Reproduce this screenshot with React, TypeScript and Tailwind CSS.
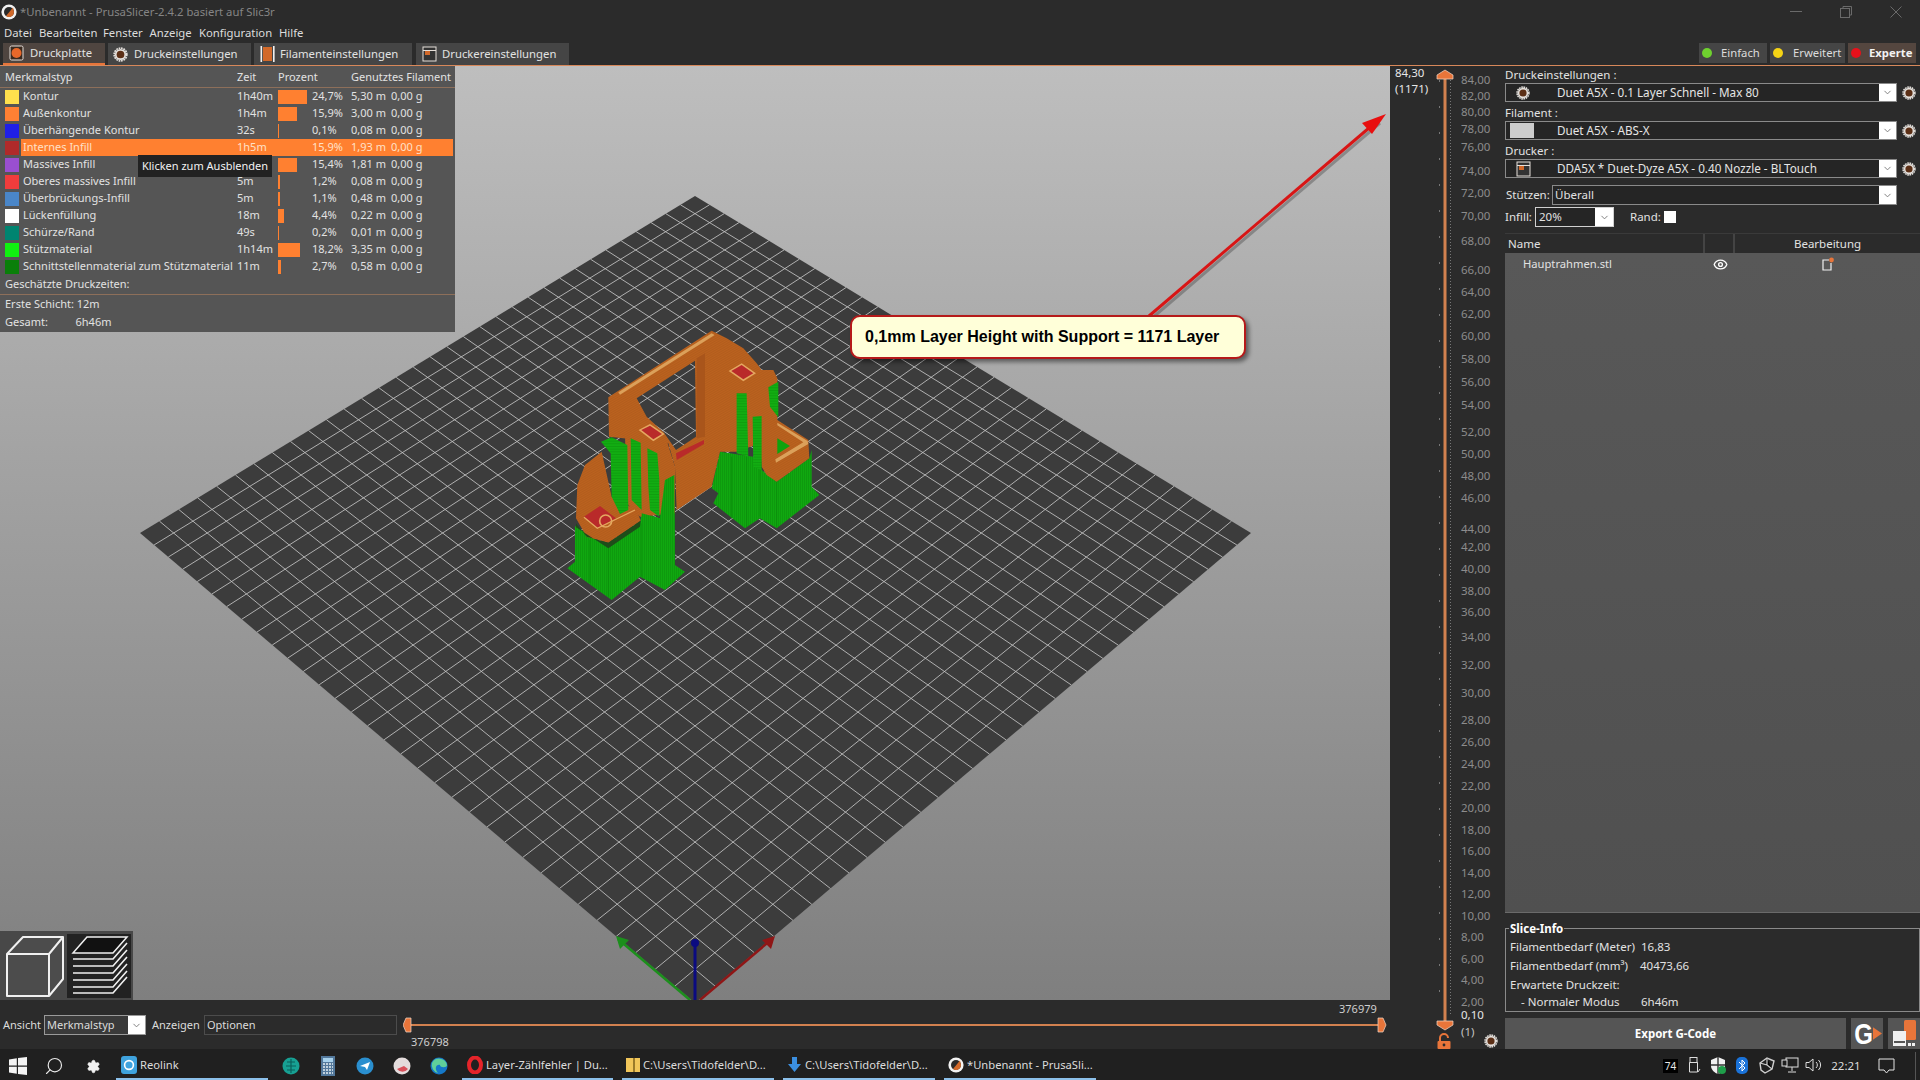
import { ChevronDown, Eye, Search, Settings } from 'lucide-react';

const rows = [
  { name: 'Kontur', color: '#ffe14d', time: '1h40m', bar: 29, pct: '24,7%', m: '5,30 m' },
  { name: 'Außenkontur', color: '#ff8033', time: '1h4m', bar: 19, pct: '15,9%', m: '3,00 m' },
  { name: 'Überhängende Kontur', color: '#1f1fe6', time: '32s', bar: 1, pct: '0,1%', m: '0,08 m' },
  { name: 'Internes Infill', color: '#b02a2a', time: '1h5m', bar: 0, pct: '15,9%', m: '1,93 m', active: true },
  { name: 'Massives Infill', color: '#9a4fd0', time: '', bar: 19, pct: '15,4%', m: '1,81 m' },
  { name: 'Oberes massives Infill', color: '#f03c3c', time: '5m', bar: 1.5, pct: '1,2%', m: '0,08 m' },
  { name: 'Überbrückungs-Infill', color: '#4a86c8', time: '5m', bar: 1.5, pct: '1,1%', m: '0,48 m' },
  { name: 'Lückenfüllung', color: '#ffffff', time: '18m', bar: 5.5, pct: '4,4%', m: '0,22 m' },
  { name: 'Schürze/Rand', color: '#008470', time: '49s', bar: 1, pct: '0,2%', m: '0,01 m' },
  { name: 'Stützmaterial', color: '#10f010', time: '1h14m', bar: 22, pct: '18,2%', m: '3,35 m' },
  { name: 'Schnittstellenmaterial zum Stützmaterial', color: '#0a7f0a', time: '11m', bar: 3, pct: '2,7%', m: '0,58 m' },
];

// top position of each height label on the layer slider
const layerLabels: [string, number][] = [
  ['84,00', 80], ['82,00', 96], ['80,00', 112], ['78,00', 129], ['76,00', 147], ['74,00', 171], ['72,00', 193],
  ['70,00', 216], ['68,00', 241], ['66,00', 270], ['64,00', 292], ['62,00', 314], ['60,00', 336], ['58,00', 359],
  ['56,00', 382], ['54,00', 405], ['52,00', 432], ['50,00', 454], ['48,00', 476], ['46,00', 498], ['44,00', 529],
  ['42,00', 547], ['40,00', 569], ['38,00', 591], ['36,00', 612], ['34,00', 637], ['32,00', 665], ['30,00', 693],
  ['28,00', 720], ['26,00', 742], ['24,00', 764], ['22,00', 786], ['20,00', 808], ['18,00', 830], ['16,00', 851],
  ['14,00', 873], ['12,00', 894], ['10,00', 916], ['8,00', 937], ['6,00', 959], ['4,00', 980], ['2,00', 1002],
];

function plateLines(n: number) {
  const [x0, y0, x1, y1, x2, y2, x3, y3] = [140, 533, 695, 196, 1251, 533, 695, 1003];
  const dx1 = x1 - x2, dx2 = x3 - x2, sx = x0 - x1 + x2 - x3;
  const dy1 = y1 - y2, dy2 = y3 - y2, sy = y0 - y1 + y2 - y3;
  const den = dx1 * dy2 - dx2 * dy1;
  const g = (sx * dy2 - dx2 * sy) / den;
  const h = (dx1 * sy - sx * dy1) / den;
  const a = x1 - x0 + g * x1, b = x3 - x0 + h * x3;
  const d = y1 - y0 + g * y1, e = y3 - y0 + h * y3;
  const pt = (u: number, v: number) => {
    const w = g * u + h * v + 1;
    return [(a * u + b * v + x0) / w, (d * u + e * v + y0) / w];
  };
  const out: number[][] = [];
  for (let i = 1; i < n; i++) {
    out.push([...pt(i / n, 0), ...pt(i / n, 1)]);
    out.push([...pt(0, i / n), ...pt(1, i / n)]);
  }
  return out;
}

function Gear({ size = 14 }: { size?: number }) {
  return (
    <svg width={size} height={size} viewBox="0 0 14 14" className="shrink-0">
      <circle cx="7" cy="7" r="5.9" fill="none" stroke="#e4e0dc" strokeWidth="1.6" strokeDasharray="1.6 0.7" />
      <circle cx="7" cy="7" r="5.2" fill="#e4e0dc" />
      <circle cx="7" cy="7" r="3.6" fill="#5c2f16" />
    </svg>
  );
}

function Combo({ icon, text }: { icon: React.ReactNode; text: string }) {
  return (
    <div className="flex items-center">
      <div className="flex h-[19px] w-[392px] items-center border border-[#8a8a8a] bg-[#252525]">
        <div className="flex w-[51px] shrink-0 items-center justify-start pl-[4px]">{icon}</div>
        <span className="flex-1 truncate text-[11.7px] text-[#e6e6e6]">{text}</span>
        <div className="flex h-full w-[17px] items-center justify-center bg-white">
          <ChevronDown size={11} color="#777" />
        </div>
      </div>
      <div className="flex flex-1 justify-center pl-[1px]">
        <Gear />
      </div>
    </div>
  );
}

function Tile({ w, icon, label }: { w: string; icon: React.ReactNode; label: string }) {
  return (
    <div className={`flex h-full items-center gap-[3px] border-b-[2px] border-[#8cc0ea] pl-[4px] text-[#dcdcdc] ${w}`}>
      {icon}
      <span className="whitespace-nowrap text-[11.2px]">{label}</span>
    </div>
  );
}

function PrusaIcon({ size = 16 }: { size?: number }) {
  return (
    <svg width={size} height={size} viewBox="0 0 16 16" className="shrink-0">
      <circle cx="8" cy="8" r="7.6" fill="#f2f2f2" />
      <circle cx="8" cy="8" r="5" fill="#2a2a2a" />
      <path d="M12 3.5 L13 8 A5 5 0 0 1 5 12 Z" fill="#d2692a" />
    </svg>
  );
}

function TabIcon({ kind }: { kind: string }) {
  if (kind === 'plate')
    return (
      <svg width="15" height="16" viewBox="0 0 15 16">
        <rect x="1" y="1" width="13" height="14" rx="1.5" fill="#3a2a20" stroke="#e6e0da" />
        <circle cx="7.5" cy="8" r="5" fill="#e8682a" />
      </svg>
    );
  if (kind === 'gear') return <Gear size={15} />;
  if (kind === 'filament')
    return (
      <svg width="15" height="16" viewBox="0 0 15 16">
        <rect x="0.5" y="0" width="1.6" height="16" fill="#f0f0f0" />
        <rect x="3" y="1" width="9" height="14" fill="#d2692a" />
        <rect x="13" y="0" width="1.6" height="16" fill="#f0f0f0" />
      </svg>
    );
  return (
    <svg width="15" height="16" viewBox="0 0 15 16">
      <rect x="1" y="1" width="13" height="14" fill="#333" stroke="#e6e0da" />
      <rect x="1" y="4" width="13" height="1" fill="#e6e0da" />
      <rect x="3" y="5" width="5" height="4" fill="#d2692a" />
    </svg>
  );
}

function Model() {
  return (
    <g transform="translate(540 310) scale(0.3333)">
      <defs>
        <pattern id="greenLines" width="6" height="6" patternUnits="userSpaceOnUse">
          <rect width="6" height="6" fill="#10a810" />
          <rect width="2" height="6" fill="#0c930c" />
        </pattern>
        <pattern id="strutLines" width="8" height="8" patternUnits="userSpaceOnUse">
          <rect width="8" height="8" fill="#12ad12" />
          <rect width="8" height="2" fill="#0d980d" />
        </pattern>
        <pattern id="orangeLines" width="8" height="6" patternUnits="userSpaceOnUse" patternTransform="rotate(-30)">
          <rect width="8" height="6" fill="#bb621f" />
          <rect width="8" height="1.5" fill="#a9571b" />
        </pattern>
      </defs>
      {/* support bases */}
      <polygon points="82,775 105,755 105,648 205,712 300,640 305,610 360,625 375,510 403,495 405,765 435,785 375,840 300,800 215,870" fill="url(#greenLines)" />
      <polygon points="515,535 540,425 640,440 665,480 710,515 808,445 815,420 815,530 838,555 710,655 660,625 615,655 520,580 535,550" fill="url(#greenLines)" />
      <g stroke="#0a8a0a" strokeWidth="2">
        <line x1="150" y1="690" x2="150" y2="820" /><line x1="205" y1="715" x2="205" y2="860" /><line x1="305" y1="640" x2="305" y2="800" />
        <line x1="575" y1="440" x2="575" y2="625" />
        <line x1="620" y1="440" x2="620" y2="650" /><line x1="660" y1="470" x2="660" y2="620" /><line x1="710" y1="515" x2="710" y2="650" />
      </g>
      {/* printed frame with window */}
      <path
        d="M205 262 L515 62 L560 85 L610 115 L650 160 L665 180 L700 180 L712 205 L712 330 L805 390 L808 445 L710 515 L680 495 L665 470 L660 400 L590 425 L540 425 L515 530 L410 600 L405 470 L385 400 L300 390 L207 380 Z M290 265 L465 152 L468 380 L408 420 L372 368 L320 320 Z"
        fill="url(#orangeLines)"
        fillRule="evenodd"
      />
      <polygon points="470,145 495,130 495,380 470,385" fill="#a9551b" />
      <polygon points="255,370 300,360 380,390 405,470 405,610 300,620 260,580" fill="url(#orangeLines)" />
      <polygon points="108,625 112,525 135,465 185,425 215,560 290,600 302,632 205,698 140,680" fill="url(#orangeLines)" />
      <polygon points="108,640 140,680 205,698 302,632 300,650 205,715 108,652" fill="#1f4d1a" />
      <polygon points="235,247 515,70 524,75 240,254" fill="#dba05a" />
      <polygon points="712,338 803,393 805,402 708,458 706,448 790,397 712,346" fill="#dba05a" />
      <polygon points="712,385 750,408 712,432" fill="#0ea30e" />
      {/* top infill patches */}
      <polygon points="566,183 605,160 648,190 610,214" fill="#e4a860" />
      <polygon points="574,183 605,165 640,190 610,208" fill="#b92a2a" />
      <polygon points="296,360 330,342 374,372 340,394" fill="#e4a860" />
      <polygon points="304,360 330,347 366,372 340,388" fill="#b92a2a" />
      <polygon points="408,430 492,390 492,402 410,450" fill="#b92a2a" />
      <polygon points="132,620 180,588 228,625 172,655" fill="#b92a2a" />
      <circle cx="197" cy="633" r="18" fill="none" stroke="#e4a860" strokeWidth="5" />
      <path d="M132 622 L172 655 L285 600" fill="none" stroke="#e4a860" strokeWidth="4" />
      {/* support struts in front of the frame */}
      <polygon points="305,610 360,625 375,510 403,495 405,770 305,780" fill="url(#greenLines)" />
      <polygon points="183,395 215,382 262,405 265,600 240,612 215,560 212,430" fill="url(#strutLines)" />
      <polygon points="272,385 302,398 305,600 275,570" fill="url(#strutLines)" />
      <polygon points="322,415 352,430 358,510 358,620 330,600 325,530" fill="url(#strutLines)" />
      <polygon points="590,250 620,250 625,440 590,430" fill="url(#strutLines)" />
      <polygon points="638,320 665,318 665,480 640,470" fill="url(#strutLines)" />
      <polygon points="685,232 715,215 715,322 690,290" fill="url(#strutLines)" />
    </g>
  );
}

function Viewport() {
  const lines = plateLines(33);
  return (
    <div className="relative h-[934px] bg-linear-to-b from-[#bebebe] to-[#7f7f7f]">
      <svg viewBox="0 66 1390 934" width="1390" height="934" className="absolute inset-0">
        <polygon points="140,533 695,196 1251,533 695,1003" fill="#3c3c3c" />
        <g stroke="#c4c4c4" strokeWidth="1" strokeOpacity="0.85">
          {lines.map((l, i) => (
            <line key={i} x1={l[0]} y1={l[1]} x2={l[2]} y2={l[3]} />
          ))}
        </g>
        <Model />
        {/* axes */}
        <line x1="690" y1="1000" x2="618" y2="939" stroke="#1c8f1c" strokeWidth="2.5" />
        <polygon points="616,936 629,940 620,949" fill="#1c8f1c" />
        <line x1="700" y1="1000" x2="772" y2="939" stroke="#8f1616" strokeWidth="2.5" />
        <polygon points="775,936 762,940 771,949" fill="#8f1616" />
        <line x1="695" y1="1000" x2="695" y2="945" stroke="#0b0b80" strokeWidth="3" />
        <circle cx="695" cy="943" r="4" fill="#0b0b80" />
        {/* annotation arrow */}
        <g transform="translate(2 3)" opacity="0.3">
          <line x1="1149" y1="316" x2="1378" y2="120" stroke="#222" strokeWidth="3" />
        </g>
        <line x1="1149" y1="316" x2="1376" y2="122" stroke="#d81616" strokeWidth="3" />
        <polygon points="1386,114 1362,123 1372,134" fill="#e80f0f" />
      </svg>

      {/* estimated print times panel */}
      <div className="absolute top-0 left-0 h-[266px] w-[455px] bg-[#555555] text-[11px] text-[#e2e2e2]">
        <div className="flex h-[22px] items-center border-b border-[#8d6f5a] pt-[2px]">
          <span className="ml-[5px] w-[232px]">Merkmalstyp</span>
          <span className="w-[41px]">Zeit</span>
          <span className="w-[73px]">Prozent</span>
          <span className="whitespace-nowrap">Genutztes Filament</span>
        </div>
        <div className="h-[187px]">
          {rows.map((r) => (
            <div key={r.name} className="flex h-[17px] items-center">
              <div className="ml-[5px] h-[14px] w-[14px] shrink-0" style={{ background: r.color }} />
              <div className={`ml-[2px] flex h-full w-[432px] items-center pl-[2px] ${r.active ? 'bg-[#ff8030] text-[#ffe0c8]' : ''}`}>
                <span className="w-[214px] whitespace-nowrap">{r.name}</span>
                <span className="w-[41px]">{r.time}</span>
                <span className="w-[34px]">
                  <div className="h-[14px] bg-[#ff8030]" style={{ width: r.bar }} />
                </span>
                <span className="w-[39px]">{r.pct}</span>
                <span className="w-[40px]">{r.m}</span>
                <span>0,00 g</span>
              </div>
            </div>
          ))}
        </div>
        <div className="flex h-[20px] items-center border-b border-[#8d6f5a] pl-[5px]">Geschätzte Druckzeiten:</div>
        <div className="flex h-[18px] items-center pl-[5px] pt-[1px]">Erste Schicht: 12m</div>
        <div className="flex h-[18px] items-center pl-[5px]">
          <span className="w-[70.5px]">Gesamt:</span>
          <span>6h46m</span>
        </div>
        <div className="absolute top-[89px] left-[138px] flex h-[22px] w-[134px] items-center justify-center bg-[#222222] text-[#f2f2f2]">
          Klicken zum Ausblenden
        </div>
      </div>

      {/* callout */}
      <div className="absolute top-[249px] left-[850px] flex h-[44px] w-[396px] items-center rounded-[10px] border-2 border-[#b51a1a] bg-[#ffffd9] pl-[13px] font-['Liberation_Sans',sans-serif] text-[16px] font-bold text-black shadow-[3px_3px_4px_rgba(0,0,0,0.45)]">
        0,1mm Layer Height with Support = 1171 Layer
      </div>

      {/* 3D / preview toggle */}
      <div className="absolute bottom-0 left-0 flex h-[69px] w-[133px] items-center bg-[#484848] pl-[5px]">
        <svg width="60" height="64" viewBox="0 0 60 64" className="shrink-0">
          <path d="M2 20 L18 3 L58 3 L58 45 L44 62 L2 62 Z" fill="#4c4c4c" />
          <path d="M2 20 L18 3 L58 3 L44 20 Z M2 20 H44 V62 H2 Z M44 20 L58 3 V45 L44 62" fill="none" stroke="#f0f0f0" strokeWidth="2" strokeLinejoin="round" />
        </svg>
        <div className="ml-[2px] flex h-[64px] w-[64px] items-center justify-center bg-[#222222]">
          <svg width="60" height="62" viewBox="0 0 60 62">
            <polygon points="4,18 18,2 58,2 44,18" fill="#111" stroke="#f0f0f0" strokeWidth="1.5" />
            {[24, 31, 38, 45, 52, 58].map((y) => (
              <path key={y} d="M4 0 H44 L58 -16" transform={`translate(0 ${y})`} fill="none" stroke="#f0f0f0" strokeWidth="1.6" />
            ))}
          </svg>
        </div>
      </div>
    </div>
  );
}

function LayerSlider() {
  return (
    <div className="relative w-[115px] shrink-0 bg-[#2b2b2b] text-[11.5px]">
      <svg width="115" height="983" className="absolute top-0 left-0">
        <line x1="49.5" y1="14" x2="49.5" y2="950" stroke="#777" strokeDasharray="2 24" />
        <line x1="60.5" y1="14" x2="60.5" y2="950" stroke="#777" strokeDasharray="1 2" />
        <line x1="55" y1="10" x2="55" y2="960" stroke="#d2814f" strokeWidth="3" />
        <polygon points="47,9 55,4 63,9 63,13 47,13" fill="#e8753a" stroke="#f0d8c8" strokeWidth="0.7" />
        <polygon points="47,955 63,955 63,959 55,964 47,959" fill="#e8753a" stroke="#f0d8c8" strokeWidth="0.7" />
        <path d="M50 976 V972 A4 4 0 0 1 58 972" fill="none" stroke="#e8753a" strokeWidth="2" />
        <rect x="47.5" y="975" width="13" height="8" rx="1" fill="#e8753a" />
        <circle cx="54" cy="979" r="1.4" fill="#2b2b2b" />
      </svg>
      <span className="absolute top-[-2px] left-[5px] text-[#e6e6e6]">84,30</span>
      <span className="absolute top-[14px] left-[5px] text-[#e6e6e6]">(1171)</span>
      {layerLabels.map(([t, y]) => (
        <span key={t} className="absolute left-[71px] -translate-y-1/2 text-[#8c8c8c]" style={{ top: y - 66 }}>
          {t}
        </span>
      ))}
      <span className="absolute top-[940px] left-[71px] text-[#e6e6e6]">0,10</span>
      <span className="absolute top-[957px] left-[71px] text-[#c4c4c4]">(1)</span>
      <div className="absolute top-[968px] left-[94px]">
        <Gear />
      </div>
    </div>
  );
}

function Sidebar() {
  return (
    <div className="flex min-w-0 flex-1 flex-col bg-[#2b2b2b] text-[11.5px] text-[#e2e2e2]">
      <div className="flex h-[17px] items-center">Druckeinstellungen :</div>
      <Combo icon={<span className="ml-[6px]"><Gear /></span>} text="Duet A5X - 0.1 Layer Schnell - Max 80" />
      <div className="mt-[2px] flex h-[17px] items-center">Filament :</div>
      <Combo icon={<div className="h-[15px] w-[24px] bg-[#cccccc]" />} text="Duet A5X - ABS-X" />
      <div className="mt-[2px] flex h-[17px] items-center">Drucker :</div>
      <Combo icon={<span className="ml-[6px] flex"><TabIcon kind="printer" /></span>} text="DDA5X * Duet-Dyze A5X - 0.40 Nozzle - BLTouch" />
      <div className="mt-[7px] flex h-[20px] items-center">
        <span className="w-[47px] pl-[1px]">Stützen:</span>
        <div className="flex h-full w-[345px] items-center border border-[#8a8a8a] bg-[#252525] pl-[2px]">
          <span className="flex-1">Überall</span>
          <div className="flex h-full w-[17px] items-center justify-center bg-white">
            <ChevronDown size={11} color="#777" />
          </div>
        </div>
      </div>
      <div className="mt-[2px] flex h-[20px] items-center">
        <span className="w-[30px]">Infill:</span>
        <div className="flex h-full w-[79px] items-center border border-[#d0d0d0] bg-[#252525] pl-[3px]">
          <span className="flex-1">20%</span>
          <div className="flex h-full w-[18px] items-center justify-center bg-white">
            <ChevronDown size={11} color="#777" />
          </div>
        </div>
        <span className="ml-[16px] w-[34px]">Rand:</span>
        <div className="h-[12px] w-[12px] bg-white" />
      </div>
      <div className="mt-[6px] grid h-[20px] grid-cols-[200px_30px_185px] border-t border-[#3a3a3a]">
        <div className="flex items-center border-r-2 border-[#444] pl-[3px]">Name</div>
        <div className="border-r-2 border-[#444]" />
        <div className="flex items-center justify-center">Bearbeitung</div>
      </div>
      <div className="h-[660px] border-b border-[#6a6a6a] bg-linear-to-b from-[#585858] to-[#505050]">
        <div className="grid h-[22px] grid-cols-[200px_30px_185px] items-center">
          <span className="pl-[18px] text-[11.2px]">Hauptrahmen.stl</span>
          <span className="flex justify-center"><Eye size={15} color="#fff" strokeWidth={2.2} /></span>
          <span className="flex justify-center">
            <svg width="14" height="14" viewBox="0 0 14 14">
              <path d="M8 3 H2 V13 H10 V6" fill="none" stroke="#f0f0f0" strokeWidth="1.2" />
              <circle cx="10.5" cy="3" r="2.4" fill="#e8753a" />
            </svg>
          </span>
        </div>
      </div>
      <div className="relative mt-[15px] h-[84px] border border-[#8a8a8a] px-[4px] pt-[8px]">
        <span className="absolute top-[-9px] left-[3px] bg-[#2b2b2b] px-[1px] font-bold text-white">Slice-Info</span>
        <div className="flex h-[19px] items-center"><span className="w-[131px]">Filamentbedarf (Meter)</span><span>16,83</span></div>
        <div className="flex h-[19px] items-center"><span className="w-[130px]">Filamentbedarf (mm³)</span><span>40473,66</span></div>
        <div className="flex h-[19px] items-center">Erwartete Druckzeit:</div>
        <div className="flex h-[15px] items-center"><span className="w-[131px] pl-[11px]">- Normaler Modus</span><span>6h46m</span></div>
      </div>
      <div className="mt-[6px] flex h-[31px] gap-[5px]">
        <div className="flex w-[341px] items-center justify-center bg-[#555555] pt-[1px] text-[11.5px] font-bold text-white">Export G-Code</div>
        <div className="flex w-[32px] items-center justify-center gap-[1px] bg-[#555555]">
          <span className="scale-x-[0.8] font-['Liberation_Sans',sans-serif] text-[30px] leading-none font-bold text-white">G</span>
          <svg width="9" height="15" viewBox="0 0 10 16" className="-ml-[4px] shrink-0"><polygon points="0,1 10,8 0,15" fill="#e8753a" /></svg>
        </div>
        <div className="flex w-[32px] items-center justify-center bg-[#555555]">
          <svg width="26" height="29" viewBox="0 0 26 29">
            <rect x="13" y="1" width="12" height="20" rx="1.5" fill="#e8753a" />
            <rect x="2" y="12" width="13" height="15" fill="#f0f0f0" />
            <rect x="3" y="22" width="11" height="2" fill="#555" />
            <rect x="16" y="22" width="9" height="7" fill="#555" />
            <rect x="17" y="24" width="3" height="3" fill="#f0f0f0" />
            <rect x="21" y="24" width="3" height="3" fill="#f0f0f0" />
          </svg>
        </div>
      </div>
    </div>
  );
}

function Taskbar() {
  return (
    <div className="flex h-[31px] items-center bg-[#202020] pt-[3px] text-[#dcdcdc]">
      <div className="flex w-[36px] justify-center">
        <svg width="18" height="18" viewBox="0 0 18 18">
          <path d="M0 2.5 L7.8 1.3 V8.5 H0 Z M9 1.1 L18 0 V8.5 H9 Z M0 9.7 H7.8 V16.8 L0 15.6 Z M9 9.7 H18 V18 L9 16.9 Z" fill="#f4f4f4" />
        </svg>
      </div>
      <div className="flex w-[36px] justify-center"><Search size={20} color="#e8e8e8" strokeWidth={1.4} className="-scale-x-100" /></div>
      <div className="flex w-[44px] justify-center pr-[1px]"><Settings size={15} color="#f2f2f2" fill="#f2f2f2" strokeWidth={1} /></div>
      <Tile
        w="w-[152px]"
        label="Reolink"
        icon={
          <svg width="16" height="18" viewBox="0 0 16 18" className="ml-[1px] shrink-0">
            <rect x="0" y="0" width="16" height="18" rx="3" fill="#3fa3de" />
            <circle cx="8" cy="9" r="4.4" fill="none" stroke="#fff" strokeWidth="1.6" />
          </svg>
        }
      />
      <div className="ml-[4.5px] flex items-center">
        <span className="flex w-[37px] justify-center">
          <svg width="20" height="20" viewBox="0 0 20 20"><circle cx="10" cy="10" r="8.5" fill="#17a093" /><path d="M6 6 H14 M5 10 H15 M6 14 H14 M10 3 V17" stroke="#0a5f5a" strokeWidth="1.2" /></svg>
        </span>
        <span className="flex w-[37px] justify-center">
          <svg width="14" height="20" viewBox="0 0 14 20"><rect width="14" height="20" fill="#53789b" /><rect x="2" y="2" width="10" height="4" fill="#a7d1ec" /><path d="M2 8 H12 M2 11 H12 M2 14 H12 M2 17 H12" stroke="#e6eef4" strokeWidth="1.6" strokeDasharray="2 1" /></svg>
        </span>
        <span className="flex w-[37px] justify-center">
          <svg width="20" height="20" viewBox="0 0 20 20"><circle cx="10" cy="10" r="8.5" fill="#2a8fcf" /><path d="M5 10 L15 6 L12 14 L10 11 Z" fill="#ffffff" /></svg>
        </span>
        <span className="flex w-[37px] justify-center">
          <svg width="20" height="20" viewBox="0 0 20 20"><circle cx="10" cy="10" r="8.5" fill="#e4dcdc" /><path d="M5 13 A7 7 0 0 0 16 13 L12 10 Z" fill="#d8505a" /></svg>
        </span>
        <span className="flex w-[37px] justify-center">
          <svg width="20" height="20" viewBox="0 0 20 20"><circle cx="10" cy="10" r="8.5" fill="#1578c8" /><path d="M3 7 A8 8 0 0 1 18 9 C18 12 11 12 11 9 C7 8 5 13 9 17 A8 8 0 0 1 3 7 Z" fill="#5fd09a" /></svg>
        </span>
      </div>
      <div className="ml-[4.5px] flex h-full gap-[9px]">
        <Tile
          w="w-[151px]"
          label="Layer-Zählfehler | Du..."
          icon={
            <svg width="16" height="18" viewBox="0 0 16 18" className="ml-[1px] shrink-0"><ellipse cx="8" cy="9" rx="6" ry="7.5" fill="none" stroke="#e5242a" strokeWidth="4" /></svg>
          }
        />
        <Tile
          w="w-[152px]"
          label="C:\Users\Tidofelder\D..."
          icon={<svg width="14" height="14" viewBox="0 0 14 14" className="shrink-0"><rect width="14" height="14" fill="#f1c65a" /><rect x="7" width="2" height="14" fill="#9a7a2a" /></svg>}
        />
        <Tile
          w="w-[152px]"
          label="C:\Users\Tidofelder\D..."
          icon={<svg width="13" height="16" viewBox="0 0 13 16" className="ml-[1px] mr-[1px] shrink-0"><path d="M4 0 H9 V7 H13 L6.5 15 L0 7 H4 Z" fill="#3b8fe0" /></svg>}
        />
        <Tile
          w="w-[152px]"
          label="*Unbenannt - PrusaSli..."
          icon={<PrusaIcon />}
        />
      </div>
      <div className="ml-auto flex items-center">
        <span className="flex h-[14px] w-[15px] items-center justify-center bg-black text-[10px] text-[#e8e8e8]">74</span>
        <div className="ml-[4px] flex">
          <span className="flex w-[24px] justify-center">
            <svg width="13" height="18" viewBox="0 0 13 18"><rect x="2" y="0.5" width="7" height="5" fill="none" stroke="#ddd" /><path d="M1.5 5.5 H9.5 V15 H1.5 Z M10 15 L12 12" fill="none" stroke="#ddd" /></svg>
          </span>
          <span className="flex w-[24px] justify-center">
            <svg width="16" height="18" viewBox="0 0 16 18"><path d="M8 0 L15 3 V9 C15 13 11 16 8 17 C5 16 1 13 1 9 V3 Z" fill="#f0f0f0" /><path d="M8 0 V17 M1 8 H15" stroke="#333" strokeWidth="1.4" /><circle cx="12" cy="13" r="4" fill="#1f9e4a" /></svg>
          </span>
          <span className="flex w-[24px] justify-center">
            <svg width="12" height="17" viewBox="0 0 12 17"><rect width="12" height="17" rx="5" fill="#1a72d8" /><path d="M3 5 L9 11 L6 14 V3 L9 6 L3 12" fill="none" stroke="#fff" strokeWidth="1" /></svg>
          </span>
          <span className="flex w-[24px] justify-center">
            <svg width="17" height="17" viewBox="0 0 17 17"><path d="M2 6 L9 1 L16 4 L14 12 L7 16 L3 13 Z" fill="none" stroke="#cfcfcf" strokeWidth="1.4" /><path d="M9 1 L9 8 L14 12 M9 8 L2 6" stroke="#cfcfcf" strokeWidth="1.2" /></svg>
          </span>
          <span className="flex w-[24px] justify-center">
            <svg width="18" height="16" viewBox="0 0 18 16"><rect x="5" y="1" width="12" height="9" fill="none" stroke="#ddd" /><rect x="1" y="3" width="5" height="6" fill="#202020" stroke="#ddd" /><path d="M11 10 V14 M7 15 H15" stroke="#ddd" /></svg>
          </span>
          <span className="flex w-[24px] justify-center">
            <svg width="18" height="16" viewBox="0 0 18 16"><path d="M1 5.5 H4 L8 2 V14 L4 10.5 H1 Z" fill="none" stroke="#ddd" /><path d="M11 5 A4 4 0 0 1 11 11 M13.5 3 A7 7 0 0 1 13.5 13" fill="none" stroke="#ddd" /></svg>
          </span>
        </div>
        <span className="ml-[4px] w-[32px] text-center text-[11.5px]">22:21</span>
        <span className="ml-[12px] flex w-[25px] justify-center">
          <svg width="17" height="16" viewBox="0 0 17 16"><path d="M1 1 H16 V12 H11 L8.5 15 L6 12 H1 Z" fill="none" stroke="#e4e4e4" /></svg>
        </span>
        <span className="ml-[16px] mr-[4px] h-[28px] w-px bg-[#555]" />
      </div>
    </div>
  );
}

export default function App() {
  return (
    <div className="flex h-[1080px] w-[1920px] flex-col overflow-hidden bg-[#2b2b2b] font-['Noto_Sans',sans-serif] text-[11.5px]">
      {/* Title bar */}
      <div className="flex h-[24px] items-center">
        <span className="ml-[1px]"><PrusaIcon /></span>
        <span className="ml-[3px] text-[11.3px] text-[#858585]">*Unbenannt - PrusaSlicer-2.4.2 basiert auf Slic3r</span>
        <div className="ml-auto mr-[18px] flex items-center gap-[38px]">
          <svg width="12" height="2" viewBox="0 0 12 2"><rect width="12" height="1" fill="#6a6a6a" /></svg>
          <svg width="12" height="12" viewBox="0 0 12 12"><rect x="0.5" y="2.5" width="9" height="9" fill="none" stroke="#6a6a6a" /><path d="M3 2 V0.5 H11.5 V9 H10" fill="none" stroke="#6a6a6a" /></svg>
          <svg width="12" height="12" viewBox="0 0 12 12"><path d="M0.5 0.5 L11.5 11.5 M11.5 0.5 L0.5 11.5" stroke="#6a6a6a" /></svg>
        </div>
      </div>

      {/* Menu */}
      <div className="flex h-[18px] items-center pl-[4px] text-[11.3px] text-[#dcdcdc]">
        <span className="w-[35px]">Datei</span>
        <span className="w-[64px]">Bearbeiten</span>
        <span className="w-[46.5px]">Fenster</span>
        <span className="w-[49.5px]">Anzeige</span>
        <span className="w-[80px]">Konfiguration</span>
        <span>Hilfe</span>
      </div>

      {/* Tabs */}
      <div className="flex h-[24px] border-b border-[#d8885a] pt-[1px] pb-0 text-[11.3px] text-[#e2e2e2]">
        <div className="ml-[3px] flex h-[22px] w-[102px] items-center border-b-2 border-[#e8753a] bg-[#4f4540] pl-[6px]">
          <span className="w-[21px]"><TabIcon kind="plate" /></span>Druckplatte
        </div>
        <div className="ml-[3px] flex h-[22px] w-[143px] items-center bg-[#454545] pl-[5px]">
          <span className="w-[21px]"><TabIcon kind="gear" /></span>Druckeinstellungen
        </div>
        <div className="ml-[3px] flex h-[22px] w-[158px] items-center bg-[#454545] pl-[6px]">
          <span className="w-[20px]"><TabIcon kind="filament" /></span>Filamenteinstellungen
        </div>
        <div className="ml-[3.5px] flex h-[22px] w-[153.5px] items-center bg-[#454545] pl-[6px]">
          <span className="w-[20.5px]"><TabIcon kind="printer" /></span>Druckereinstellungen
        </div>
        <div className="ml-auto mr-[4px] flex gap-[3px]">
          <div className="flex h-[20px] w-[68px] items-center bg-[#454545] pl-[3px] text-[#dcdcdc]">
            <span className="mr-[9px] h-[10px] w-[10px] rounded-full bg-[#6fd12f]" />Einfach
          </div>
          <div className="flex h-[20px] w-[75px] items-center bg-[#454545] pl-[3px] text-[#dcdcdc]">
            <span className="mr-[10px] h-[10px] w-[10px] rounded-full bg-[#f5d315]" />Erweitert
          </div>
          <div className="flex h-[20px] w-[68px] items-center bg-[#54463f] pl-[3px] font-bold text-[#f2f2f2]">
            <span className="mr-[8px] h-[10px] w-[10px] rounded-full bg-[#e8101a]" />Experte
          </div>
        </div>
      </div>

      {/* Main */}
      <div className="flex h-[983px]">
        <div className="flex w-[1390px] shrink-0 flex-col">
          <Viewport />
          <div className="relative flex h-[49px] items-start pt-[15px] text-[11px] text-[#dcdcdc]">
            <span className="ml-[3px] mt-[2px] w-[41px]">Ansicht</span>
            <div className="flex h-[20px] w-[102px] items-center border border-[#9a9a9a] bg-[#3a3a3a] pl-[2px]">
              <span className="flex-1 pt-[1px]">Merkmalstyp</span>
              <div className="flex h-full w-[17px] items-center justify-center bg-white"><ChevronDown size={11} color="#777" /></div>
            </div>
            <span className="ml-[6px] mt-[2px] w-[52px]">Anzeigen</span>
            <div className="flex h-[20px] w-[193px] items-center border border-[#4c4c4c] pl-[2px] pt-[1px]">Optionen</div>
            <svg width="984" height="20" viewBox="0 0 984 20" className="ml-[6px] shrink-0">
              <line x1="4" y1="10" x2="976" y2="10" stroke="#d2814f" strokeWidth="2" />
              <polygon points="0,10 3,3 8,3 8,17 3,17" fill="#e8753a" stroke="#f0d8c8" strokeWidth="0.7" />
              <polygon points="975,3 980,3 983,10 980,17 975,17" fill="#e8753a" stroke="#f0d8c8" strokeWidth="0.7" />
            </svg>
            <span className="absolute top-[34px] left-[411px] text-[#cfcfcf]">376798</span>
            <span className="absolute top-[1px] left-[1339px] text-[#cfcfcf]">376979</span>
          </div>
        </div>
        <LayerSlider />
        <Sidebar />
      </div>

      <Taskbar />
    </div>
  );
}
